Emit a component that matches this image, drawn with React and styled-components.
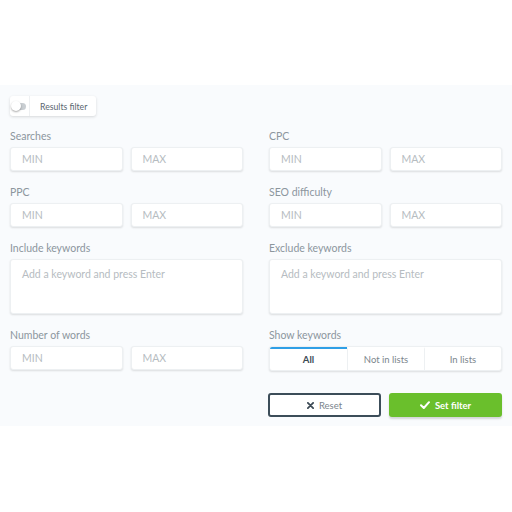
import styled, { createGlobalStyle } from 'styled-components';

const GlobalStyle = createGlobalStyle`
  html, body { margin: 0; padding: 0; background: #ffffff; }
  body { font-family: Lato, 'Open Sans', sans-serif; }
  * { box-sizing: border-box; }
`;

const Page = styled.div`
  padding-top: 85px;
`;

const Panel = styled.div`
  background: #f9fbfd;
  padding: 11px 10px 9px 10px;
`;

const ToggleBox = styled.div`
  display: flex;
  width: fit-content;
  align-items: stretch;
  height: 20px;
  background: #ffffff;
  border-radius: 3px;
  box-shadow: 0 1px 3px rgba(0, 0, 0, 0.14);
  margin-bottom: 13px;
`;

const ToggleSwitch = styled.div`
  width: 20px;
  display: flex;
  align-items: center;
  justify-content: center;
  border-right: 1px solid #eef0f2;
`;

const Track = styled.div`
  position: relative;
  width: 13px;
  height: 7px;
  border-radius: 4px;
  background: #c9ced2;
`;

const Knob = styled.div`
  position: absolute;
  left: -2px;
  top: -2px;
  width: 10px;
  height: 10px;
  border-radius: 50%;
  background: #ffffff;
  box-shadow: 0 1px 2px rgba(0, 0, 0, 0.35);
`;

const ToggleLabel = styled.div`
  padding: 0 9px 0 10px;
  display: flex;
  align-items: center;
  font-size: 8.7px;
  color: #5b6770;
`;

const Grid = styled.div`
  display: grid;
  grid-template-columns: 1fr 1fr;
  column-gap: 26px;
  row-gap: 14px;
`;

const Field = styled.div`
  display: flex;
  flex-direction: column;
`;

const Label = styled.div`
  font-size: 10.5px;
  line-height: 14px;
  color: #8c969d;
  margin-bottom: 4px;
`;

const Pair = styled.div`
  display: grid;
  grid-template-columns: 1fr 1fr;
  gap: 8px;
`;

const Box = styled.div`
  height: ${(p) => (p.$tall ? '55px' : '24px')};
  background: #ffffff;
  border: 1px solid #edf0f2;
  border-radius: 3px;
  box-shadow: 0 1px 2px rgba(0, 0, 0, 0.12);
  padding: ${(p) => (p.$tall ? '8px 11px' : '0 11px')};
  display: flex;
  align-items: ${(p) => (p.$tall ? 'flex-start' : 'center')};
  font-size: 10.5px;
  color: #b6bcc1;
`;

const Segmented = styled.div`
  display: grid;
  grid-template-columns: 1fr 1fr 1fr;
  height: 25px;
  background: #ffffff;
  border-radius: 3px;
  box-shadow: 0 1px 2px rgba(0, 0, 0, 0.12);
  border: 1px solid #edf0f2;
  overflow: hidden;
`;

const Segment = styled.div`
  display: flex;
  align-items: center;
  justify-content: center;
  font-size: 9.5px;
  color: ${(p) => (p.$active ? '#3c4a55' : '#7c868d')};
  font-weight: ${(p) => (p.$active ? 700 : 400)};
  border-top: 2px solid ${(p) => (p.$active ? '#2f9fe6' : 'transparent')};
  & + & { border-left: 1px solid #edf0f2; }
`;

const Actions = styled.div`
  display: grid;
  grid-template-columns: 1fr 1fr;
  column-gap: 26px;
  margin-top: 22px;
`;

const ButtonPair = styled.div`
  grid-column: 2;
  display: grid;
  grid-template-columns: 1fr 1fr;
  gap: 8px;
  margin-left: -1px;
`;

const Button = styled.button`
  height: 24px;
  border-radius: 3px;
  display: flex;
  align-items: center;
  justify-content: center;
  gap: 5px;
  font-family: inherit;
  font-size: 9.5px;
  cursor: pointer;
  padding: 0;
  ${(p) =>
    p.$primary
      ? `
    background: #6abf2c;
    border: none;
    color: #ffffff;
    font-weight: 700;
    box-shadow: 0 2px 2px rgba(0, 0, 0, 0.15);
  `
      : `
    background: #ffffff;
    border: 2px solid #3c4d59;
    color: #7a858d;
  `}
`;

const minMax = ['MIN', 'MAX'];

const RangeField = ({ label }) => (
  <Field>
    <Label>{label}</Label>
    <Pair>
      {minMax.map((t) => (
        <Box key={t}>{t}</Box>
      ))}
    </Pair>
  </Field>
);

const KeywordField = ({ label }) => (
  <Field>
    <Label>{label}</Label>
    <Box $tall>Add a keyword and press Enter</Box>
  </Field>
);

export default function App() {
  return (
    <Page>
      <GlobalStyle />
      <Panel>
        <ToggleBox>
          <ToggleSwitch>
            <Track>
              <Knob />
            </Track>
          </ToggleSwitch>
          <ToggleLabel>Results filter</ToggleLabel>
        </ToggleBox>
        <Grid>
          <RangeField label="Searches" />
          <RangeField label="CPC" />
          <RangeField label="PPC" />
          <RangeField label="SEO difficulty" />
          <KeywordField label="Include keywords" />
          <KeywordField label="Exclude keywords" />
          <RangeField label="Number of words" />
          <Field>
            <Label>Show keywords</Label>
            <Segmented>
              <Segment $active>All</Segment>
              <Segment>Not in lists</Segment>
              <Segment>In lists</Segment>
            </Segmented>
          </Field>
        </Grid>
        <Actions>
          <ButtonPair>
            <Button>
              <svg width="7" height="7" viewBox="0 0 8 8">
                <path d="M1 1 L7 7 M7 1 L1 7" stroke="#3c4a55" strokeWidth="2" strokeLinecap="round" />
              </svg>
              Reset
            </Button>
            <Button $primary>
              <svg width="10" height="8" viewBox="0 0 10 8">
                <path d="M1 4.2 L3.8 7 L9 1.2" stroke="#ffffff" strokeWidth="2" fill="none" strokeLinecap="round" strokeLinejoin="round" />
              </svg>
              Set filter
            </Button>
          </ButtonPair>
        </Actions>
      </Panel>
    </Page>
  );
}
